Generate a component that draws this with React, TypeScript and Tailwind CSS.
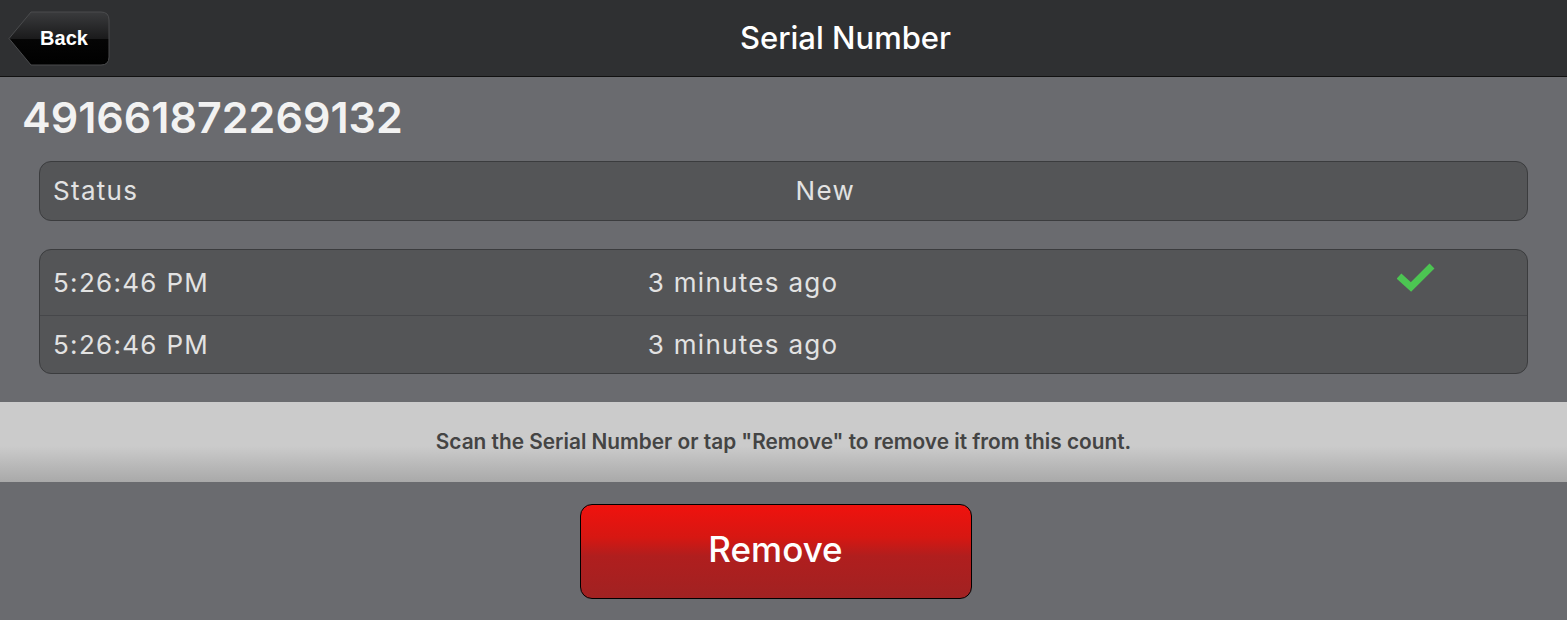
import React from "react"

const BackButton: React.FC = () => {
  return (
    <button className="relative w-[102px] h-[55px] ml-2 flex items-center justify-center pl-[10px]">
      <svg className="absolute inset-0" width="102" height="55" viewBox="0 0 102 55">
        <defs>
          <linearGradient id="backGrad" x1="0" y1="0" x2="0" y2="1">
            <stop offset="0" stopColor="#3a3b3d" />
            <stop offset="0.5" stopColor="#1b1b1c" />
            <stop offset="0.52" stopColor="#050505" />
            <stop offset="1" stopColor="#000000" />
          </linearGradient>
        </defs>
        <path
          d="M 1 27.5 L 23 1 L 93 1 Q 101 1 101 9 L 101 46 Q 101 54 93 54 L 23 54 Z"
          fill="url(#backGrad)"
          stroke="#4a4b4d"
          strokeWidth="1"
        />
      </svg>
      <span className="relative text-white font-bold text-[20px] font-['Liberation_Sans',sans-serif]">
        Back
      </span>
    </button>
  )
}

const Check: React.FC = () => (
  <svg width="40" height="34" viewBox="0 0 40 34">
    <polyline
      points="2,15 14,26 35,5"
      fill="none"
      stroke="#4cc552"
      strokeWidth="7"
      strokeLinecap="butt"
      strokeLinejoin="miter"
    />
  </svg>
)

const App: React.FC = () => {
  return (
    <div className="w-[1567px] h-[620px] bg-[#6a6b6f] font-['Inter',sans-serif] overflow-hidden">
      <header className="relative h-[77px] bg-[#2f3032] border-b border-[#111] flex items-center">
        <BackButton />
        <h1 className="absolute left-0 right-0 pl-[124px] text-center text-white text-[31px] font-medium pointer-events-none">
          Serial Number
        </h1>
      </header>
      <section className="px-[22px]">
        <h2 className="text-[#f2f2f2] text-[43px] font-semibold leading-none mt-[19px]">
          491661872269132
        </h2>
        <div className="mx-[17px] mt-[22px] h-[60px] rounded-[12px] bg-[#545557] border border-[#3b3c3e] flex items-center text-[#e2e2e2] text-[26px] tracking-[0.05em]">
          <div className="w-1/2 pl-[13px] -mt-[2px]">Status</div>
          <div className="w-1/2 pl-[12px] -mt-[2px]">New</div>
        </div>
        <div className="mx-[17px] mt-[28px] rounded-[12px] bg-[#545557] border border-[#3b3c3e] text-[#e2e2e2] text-[26px] tracking-[0.05em] overflow-hidden">
          <div className="h-[66px] flex items-center border-b border-[#46474a]">
            <div className="w-[40%] pl-[13px]">5:26:46 PM</div>
            <div className="w-[40%] pl-[13px]">3 minutes ago</div>
            <div className="w-[20%] pl-[167px] -mt-[9px]">
              <Check />
            </div>
          </div>
          <div className="h-[57px] flex items-center">
            <div className="w-[40%] pl-[13px]">5:26:46 PM</div>
            <div className="w-[40%] pl-[13px]">3 minutes ago</div>
            <div className="w-[20%]" />
          </div>
        </div>
      </section>
      <div className="mt-[28px] h-[80px] bg-[linear-gradient(to_bottom,#cbcbcb_0%,#cbcbcb_55%,#a9a9a9_100%)] flex items-center justify-center">
        <p className="text-[#444] text-[20.8px] font-semibold">
          Scan the Serial Number or tap "Remove" to remove it from this count.
        </p>
      </div>
      <div className="flex justify-center pt-[22px] pr-[16px]">
        <button className="w-[392px] h-[95px] pb-[5px] rounded-[12px] border border-black bg-[linear-gradient(to_bottom,#f0120e_0%,#d61712_35%,#b01e1e_55%,#a12222_100%)] text-white text-[35px] font-medium">
          Remove
        </button>
      </div>
    </div>
  )
}

export default App
